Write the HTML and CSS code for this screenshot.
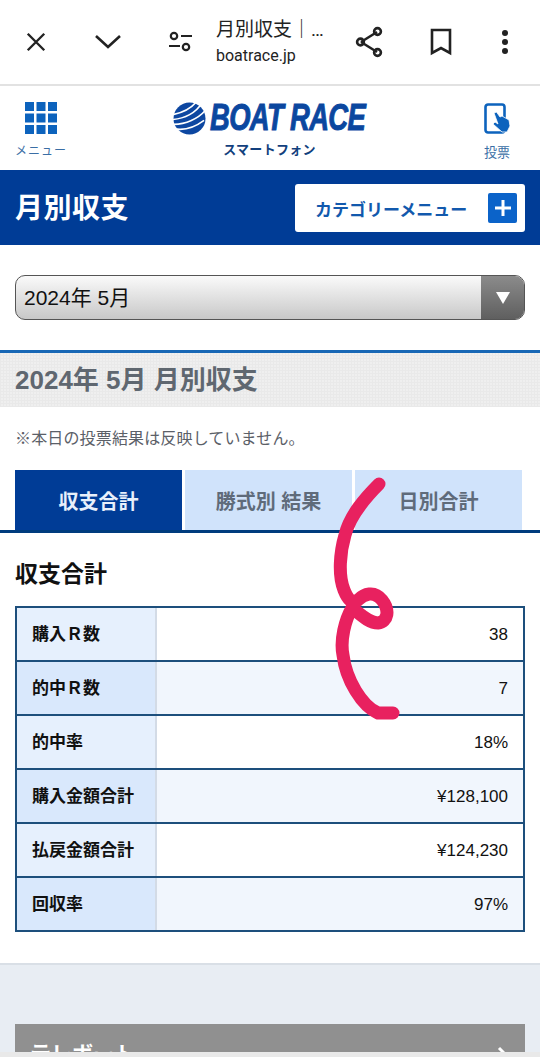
FILE: index.html
```html
<!DOCTYPE html>
<html lang="ja">
<head>
<meta charset="utf-8">
<title>月別収支</title>
<link rel="stylesheet" href="styles.css">
</head>
<body>
<div class="page">
  <div class="chrome">
    <span class="slot"><svg class="ci ci-close" viewBox="0 0 24 24"><path d="M3 3 21 21M21 3 3 21"/></svg></span>
    <span class="slot"><svg class="ci ci-down" viewBox="0 0 28 16"><path d="M2 2 14 13 26 2"/></svg></span>
    <span class="slot"><svg class="ci ci-tune" viewBox="0 0 24 22"><circle cx="6" cy="5" r="3.2"/><path d="M13 5H24M1 15H12"/><circle cx="18" cy="16" r="3.2"/></svg></span>
    <div class="chrome-title">
      <div class="chrome-name">月別収支｜…</div>
      <div class="chrome-url">boatrace.jp</div>
    </div>
    <span class="slot"><svg class="ci ci-share" viewBox="0 0 28 32"><path d="M6 16 22 6M6 16 22 26"/><circle cx="5.5" cy="16" r="3.4"/><circle cx="22.5" cy="5.5" r="3.4"/><circle cx="22.5" cy="26.5" r="3.4"/></svg></span>
    <span class="slot"><svg class="ci ci-mark" viewBox="0 0 22 28"><path d="M2 2H20V25L11 20 2 25Z"/></svg></span>
    <span class="slot slot-end"><svg class="ci-dots" viewBox="0 0 8 26"><circle cx="4" cy="4" r="3"/><circle cx="4" cy="13" r="3"/><circle cx="4" cy="22" r="3"/></svg></span>
  </div>

  <header class="site">
    <div class="site-side">
      <svg class="grid-icon" viewBox="0 0 32 32"><path d="M0 0H9V9H0ZM11.500 0H20.500V9H11.500ZM23 0H32V9H23ZM0 11.500H9V20.500H0ZM11.500 11.500H20.500V20.500H11.500ZM23 11.500H32V20.500H23ZM0 23H9V32H0ZM11.500 23H20.500V32H11.500ZM23 23H32V32H23Z"/></svg>
      <span class="side-label">メニュー</span>
    </div>
    <div class="brand">
      <div class="brand-row">
        <svg class="brand-ball" viewBox="0 0 34 34">
          <circle cx="17" cy="17" r="16.500"/>
          <g class="ball-lines">
            <path d="M0 13C10 11 19 6 24 0"/>
            <path d="M0 18C12 17 24 11 29 2"/>
            <path d="M1 23C13 23 26 17 33 9"/>
            <path d="M4 28C14 29 24 25 32 19"/>
          </g>
        </svg>
        <span class="brand-name">BOAT RACE</span>
      </div>
      <div class="brand-sub">スマートフォン</div>
    </div>
    <div class="site-side site-vote">
      <svg class="vote-icon" viewBox="0 0 26 32">
        <rect class="vote-phone" x="1.500" y="1.500" width="19" height="28" rx="2.500"/>
        <path class="vote-hand" d="M10 10 12.500 9 16 14 18 13 25 17 26 23 23 29 18 29 9 21 11 19 14 21Z"/>
      </svg>
      <span class="side-label side-label-vote">投票</span>
    </div>
  </header>

  <div class="titlebar">
    <h1 class="page-title">月別収支</h1>
    <div class="cat-btn">
      <span class="cat-label">カテゴリーメニュー</span>
      <span class="cat-plus"><svg viewBox="0 0 20 20"><path d="M10 2V18M2 10H18"/></svg></span>
    </div>
  </div>

  <div class="select-wrap">
    <div class="select">
      <span class="select-value">2024年 5月</span>
      <span class="select-arrow"><svg viewBox="0 0 16 14"><path d="M1 1H15L8 13Z"/></svg></span>
    </div>
  </div>

  <h2 class="section-head">2024年 5月 月別収支</h2>
  <p class="note">※本日の投票結果は反映していません。</p>

  <div class="tabs">
    <div class="tab tab-on">収支合計</div>
    <div class="tab">勝式別 結果</div>
    <div class="tab">日別合計</div>
  </div>

  <h3 class="sub-head">収支合計</h3>

  <div class="table-wrap">
    <table class="stats">
      <tr><th>購入Ｒ数</th><td>38</td></tr>
      <tr class="alt"><th>的中Ｒ数</th><td>7</td></tr>
      <tr><th>的中率</th><td>18%</td></tr>
      <tr class="alt"><th>購入金額合計</th><td>¥128,100</td></tr>
      <tr><th>払戻金額合計</th><td>¥124,230</td></tr>
      <tr class="alt"><th>回収率</th><td>97%</td></tr>
    </table>
  </div>

  <footer class="foot">
    <div class="tele-btn">
      <span class="tele-label">テレボート</span>
      <svg class="tele-chev" viewBox="0 0 12 20"><path d="M2 2 10 10 2 18"/></svg>
    </div>
  </footer>

  <svg class="scribble" viewBox="0 0 540 1057">
    <path d="M379 484C365 498 350 515 345 535C340 552 338 575 344 590C348 600 352 604 358 600C364 594 374 590 382 600C390 610 388 622 378 623C368 623 358 612 352 608C345 620 340 640 343 655C346 680 362 706 378 713L393 713"/>
  </svg>
  <div class="bottom-strip"></div>
</div>
</body>
</html>
```
FILE: styles.css
```css
* { box-sizing: border-box; }
html, body { margin: 0; padding: 0; background: #fff; }
body { font-family: "Liberation Sans", "Noto Sans CJK JP", sans-serif; color: #000; }
.page { position: relative; width: 540px; height: 1057px; overflow: hidden; background: #fff; }

.chrome { height: 86px; display: flex; align-items: center; border-bottom: 2px solid #e2e2e2; }
.slot { width: 72px; height: 72px; flex: none; display: flex; align-items: center; justify-content: center; }
.slot-end { width: 63px; padding-right: 7px; }
.ci { fill: none; stroke: #222; stroke-width: 2.600; flex: none; }
.ci-close { width: 22px; height: 22px; }
.ci-down { width: 28px; height: 16px; }
.ci-tune { width: 24px; height: 22px; stroke-width: 2.200; }
.chrome-title { width: 117px; flex: none; margin-top: -1px; }
.chrome-name { font-family: Roboto, "Noto Sans CJK JP", sans-serif; font-size: 19px; line-height: 27px; color: #222; white-space: nowrap; }
.chrome-url { font-family: Roboto, sans-serif; font-size: 16px; line-height: 22px; color: #222; margin-top: 2px; }
.ci-share { width: 28px; height: 32px; }
.ci-mark { width: 22px; height: 28px; }
.ci-dots { width: 8px; height: 26px; fill: #222; flex: none; }

.site { height: 84px; display: flex; justify-content: space-between; background: #fff; }
.site-side { width: 82px; display: flex; flex-direction: column; align-items: center; padding-top: 16px; }
.grid-icon { width: 32px; height: 32px; fill: #0d63bd; }
.side-label { font-size: 12px; line-height: 14px; color: #3a6ea5; margin-top: 10px; letter-spacing: 1px; }
.site-vote { width: 86px; padding-top: 17px; }
.side-label-vote { margin-top: 11px; font-size: 13px; letter-spacing: 0; }
.vote-icon { width: 26px; height: 32px; }
.vote-phone { fill: #fff; stroke: #0d63bd; stroke-width: 2.600; }
.vote-hand { fill: #0d63bd; stroke: #fff; stroke-width: .8; }
.brand { width: 194px; display: flex; flex-direction: column; align-items: center; padding-top: 15px; margin-left: 3px; }
.brand-row { width: 194px; display: flex; align-items: center; height: 34px; }
.brand-ball { width: 33px; height: 33px; flex: none; }
.brand-ball circle { fill: #0d47a1; }
.ball-lines path { fill: none; stroke: #fff; stroke-width: 1.700; }
.brand-name { flex: none; font-size: 36px; font-weight: 700; font-style: italic; color: #0b479f; letter-spacing: -.8px; margin-left: 4px; white-space: nowrap; -webkit-text-stroke: 1px #0b479f; transform: scaleX(.76); transform-origin: left center; }
.brand-sub { font-size: 13px; font-weight: 700; line-height: 16px; color: #123f7d; margin-top: 7px; letter-spacing: .3px; }

.titlebar { height: 75px; background: #003c96; display: flex; align-items: center; justify-content: space-between; padding: 0 15px; }
.page-title { margin: 3px 0 0; font-size: 28px; font-weight: 700; letter-spacing: .5px; color: #fff; line-height: 36px; }
.cat-btn { width: 230px; height: 48px; margin-top: 1px; background: #fff; border-radius: 3px; display: flex; align-items: center; justify-content: space-between; padding: 0 8px 0 20px; }
.cat-label { font-size: 17px; font-weight: 700; color: #1259ad; white-space: nowrap; }
.cat-plus { width: 29px; height: 30px; background: #0b63c9; border-radius: 2px; display: flex; align-items: center; justify-content: center; }
.cat-plus svg { width: 20px; height: 20px; fill: none; stroke: #fff; stroke-width: 3; }

.select-wrap { height: 105px; padding: 30px 15px 0; }
.select { height: 45px; border: 1px solid #555; border-radius: 10px; overflow: hidden; display: flex; background: linear-gradient(#fafafa, #c8c8c8); }
.select-value { flex: 1; font-size: 21px; line-height: 44px; padding-left: 8px; color: #111; }
.select-arrow { width: 43px; background: linear-gradient(#8b8b8b, #5f5f5f); display: flex; align-items: center; justify-content: center; }
.select-arrow svg { width: 16px; height: 14px; fill: #fff; }

.section-head { margin: 0; height: 57px; border-top: 3px solid #1767b5; background-color: #efefef; background-image: repeating-linear-gradient(90deg, #e9e9e9 0 1px, transparent 1px 3px), repeating-linear-gradient(0deg, #e9e9e9 0 1px, transparent 1px 3px); font-size: 26px; font-weight: 700; line-height: 54px; color: #5f6770; padding-left: 15px; }
.note { margin: 0; height: 63px; padding: 22px 0 0 15px; font-size: 16px; line-height: 20px; letter-spacing: .15px; color: #5b6068; }

.tabs { display: flex; gap: 3px; padding-left: 15px; height: 63px; border-bottom: 3px solid #003c7e; }
.tab { width: 167px; height: 60px; background: #d0e3fb; color: #5f6b7a; font-size: 20px; font-weight: 700; line-height: 64px; text-align: center; }
.tab-on { background: #003c96; color: #e8f0fb; }

.sub-head { margin: 0; height: 73px; padding: 24px 0 0 15px; font-size: 23px; line-height: 34px; font-weight: 700; color: #111; }

.table-wrap { padding: 0 15px; height: 357px; }
.stats { width: 510px; height: 326px; border-collapse: collapse; border: 2px solid #1d4f7c; table-layout: fixed; }
.stats tr { height: 54px; border-bottom: 2px solid #1d4f7c; }
.stats th { width: 141px; background: #e6f0fd; box-shadow: inset -2px 0 0 #d3dbe6; font-size: 17px; line-height: 22px; font-weight: 700; text-align: left; padding: 2px 0 0 15px; color: #111; }
.stats td { background: #fff; font-size: 17px; line-height: 22px; text-align: right; padding: 2px 15px 0 0; color: #111; }
.stats .alt th { background: #d9e8fc; }
.stats .alt td { background: #f1f6fd; }

.foot { height: 94px; background: #e8edf3; border-top: 2px solid #d9dfe6; padding: 59px 15px 0; }
.tele-btn { height: 60px; background: #909090; display: flex; justify-content: space-between; padding: 16px 16px 0 15px; }
.tele-label { color: #fff; font-size: 21px; font-weight: 700; line-height: 28px; }
.tele-chev { width: 12px; height: 20px; margin-top: 6px; fill: none; stroke: #fff; stroke-width: 3; }

.scribble { position: absolute; left: 0; top: 0; width: 540px; height: 1057px; fill: none; stroke: #e8215f; stroke-width: 13; stroke-linecap: round; stroke-linejoin: round; pointer-events: none; }
.bottom-strip { position: absolute; left: 0; right: 0; bottom: 0; height: 5px; background: #e9e9e9; }
```
